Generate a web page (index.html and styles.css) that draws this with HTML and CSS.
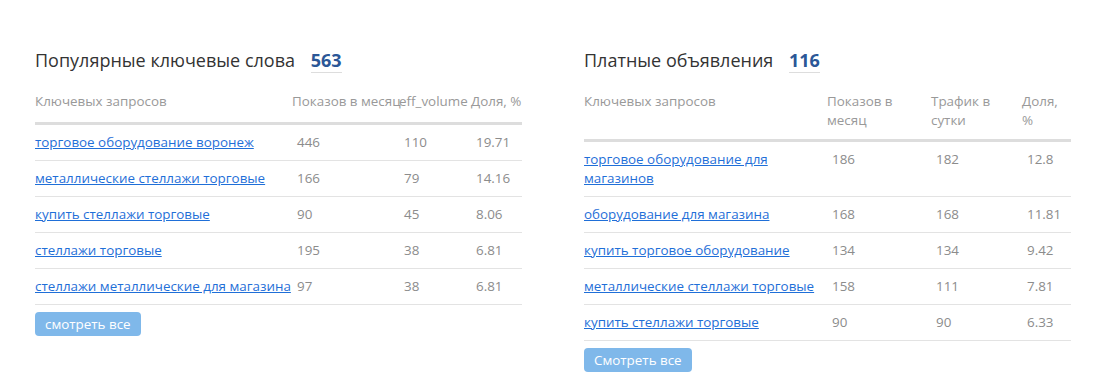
FILE: index.html
```html
<!DOCTYPE html>
<html lang="ru">
<head>
    <meta charset="UTF-8">
    <title>Ключевые слова</title>
    <link rel="stylesheet" href="styles.css">
</head>
<body>
    <div class="wrap">
        <!-- Organic keywords -->
        <div class="panel">
            <h2 class="panel-title">Популярные ключевые слова <span class="count">563</span></h2>
            <table class="kw-table kw-table-nowrap">
                <colgroup>
                    <col style="width: 257px">
                    <col style="width: 107px">
                    <col style="width: 72px">
                    <col style="width: 51px">
                </colgroup>
                <thead>
                    <tr>
                        <th>Ключевых запросов</th>
                        <th>Показов в месяц</th>
                        <th>eff_volume</th>
                        <th>Доля, %</th>
                    </tr>
                </thead>
                <tbody>
                    <tr><td><a href="#">торговое оборудование воронеж</a></td><td class="num">446</td><td class="num">110</td><td class="num">19.71</td></tr>
                    <tr><td><a href="#">металлические стеллажи торговые</a></td><td class="num">166</td><td class="num">79</td><td class="num">14.16</td></tr>
                    <tr><td><a href="#">купить стеллажи торговые</a></td><td class="num">90</td><td class="num">45</td><td class="num">8.06</td></tr>
                    <tr><td><a href="#">стеллажи торговые</a></td><td class="num">195</td><td class="num">38</td><td class="num">6.81</td></tr>
                    <tr><td><a href="#">стеллажи металлические для магазина</a></td><td class="num">97</td><td class="num">38</td><td class="num">6.81</td></tr>
                </tbody>
            </table>
            <button class="btn-more">смотреть все</button>
        </div>

        <!-- Paid ads -->
        <div class="panel">
            <h2 class="panel-title">Платные объявления <span class="count">116</span></h2>
            <table class="kw-table">
                <colgroup>
                    <col style="width: 243px">
                    <col style="width: 104px">
                    <col style="width: 91px">
                    <col style="width: 49px">
                </colgroup>
                <thead>
                    <tr>
                        <th>Ключевых запросов</th>
                        <th>Показов в месяц</th>
                        <th>Трафик в сутки</th>
                        <th>Доля, %</th>
                    </tr>
                </thead>
                <tbody>
                    <tr><td><a href="#">торговое оборудование для магазинов</a></td><td class="num">186</td><td class="num">182</td><td class="num">12.8</td></tr>
                    <tr><td><a href="#">оборудование для магазина</a></td><td class="num">168</td><td class="num">168</td><td class="num">11.81</td></tr>
                    <tr><td><a href="#">купить торговое оборудование</a></td><td class="num">134</td><td class="num">134</td><td class="num">9.42</td></tr>
                    <tr><td><a href="#">металлические стеллажи торговые</a></td><td class="num">158</td><td class="num">111</td><td class="num">7.81</td></tr>
                    <tr><td><a href="#">купить стеллажи торговые</a></td><td class="num">90</td><td class="num">90</td><td class="num">6.33</td></tr>
                </tbody>
            </table>
            <button class="btn-more">Смотреть все</button>
        </div>
    </div>
</body>
</html>
```

FILE: styles.css
```css
body {
    margin: 0;
    background: #fff;
    font-family: "Open Sans", Arial, sans-serif;
    color: #333;
}
.wrap {
    display: flex;
    gap: 62px;
    padding: 48px 0 0 35px;
}
.panel {
    width: 487px;
}
.panel-title {
    margin: 0 0 19px;
    font-size: 18px;
    font-weight: normal;
    line-height: 25px;
    color: #333;
}
.count {
    margin-left: 11px;
    font-weight: bold;
    color: #2b5797;
    border-bottom: 1px solid #ddd;
}
.kw-table {
    width: 487px;
    table-layout: fixed;
    border-collapse: collapse;
    font-size: 13.4px;
    line-height: 19px;
}
.kw-table th {
    padding: 0 4px 9px 0;
    text-align: left;
    vertical-align: top;
    font-weight: normal;
    color: #999;
    border-bottom: 3px solid #ddd;
}
.kw-table-nowrap th {
    white-space: nowrap;
    padding: 0 0 11px;
}
.kw-table td {
    padding: 8px 0;
    vertical-align: top;
    border-bottom: 1px solid #e3e3e3;
}
.kw-table td.num {
    padding-left: 5px;
    color: #8c8c8c;
}
.kw-table a {
    color: #1f6fd8;
    text-decoration: underline;
}
.btn-more {
    margin-top: 7px;
    padding: 0 10px;
    height: 24px;
    border: none;
    border-radius: 4px;
    background: #7fb8ea;
    color: #fff;
    font-family: inherit;
    font-size: 13.4px;
    cursor: pointer;
}
```
